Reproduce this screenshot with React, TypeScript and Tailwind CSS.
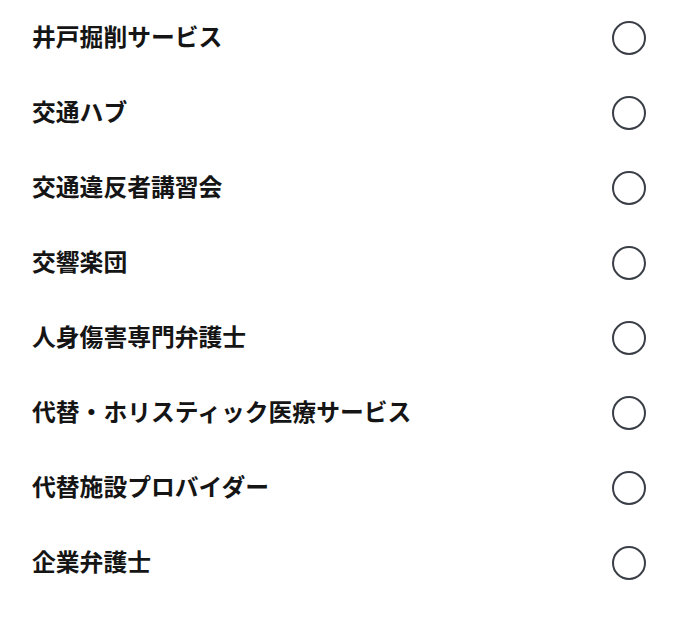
const options = [
  "井戸掘削サービス",
  "交通ハブ",
  "交通違反者講習会",
  "交響楽団",
  "人身傷害専門弁護士",
  "代替・ホリスティック医療サービス",
  "代替施設プロバイダー",
  "企業弁護士",
];

const OptionRow = ({ label }: { label: string }) => {
  return (
    <label className="flex h-[75px] cursor-pointer items-center justify-between pl-[32px] pr-[34px]">
      <span className="pb-[3px] text-[23.8px] font-bold text-[#151515]">
        {label}
      </span>
      <span className="box-border size-[34px] rounded-full border-[2.5px] border-[#3a3f47]" />
    </label>
  );
};

export default function App() {
  return (
    <div
      className="min-h-[622px] w-[680px] bg-white"
      style={{ fontFamily: '"Noto Sans CJK JP", "Noto Sans", sans-serif' }}
    >
      {options.map((o) => (
        <OptionRow key={o} label={o} />
      ))}
    </div>
  );
}
